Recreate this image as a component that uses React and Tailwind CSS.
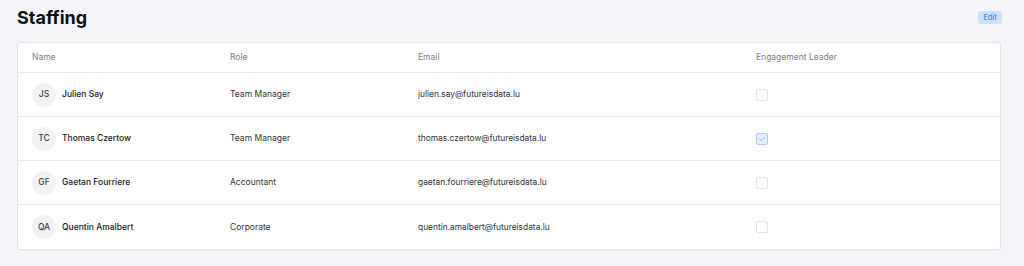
import React from "react";

const people = [
  { initials: "JS", name: "Julien Say", role: "Team Manager", email: "julien.say@futureisdata.lu", leader: false },
  { initials: "TC", name: "Thomas Czertow", role: "Team Manager", email: "thomas.czertow@futureisdata.lu", leader: true },
  { initials: "GF", name: "Gaetan Fourriere", role: "Accountant", email: "gaetan.fourriere@futureisdata.lu", leader: false },
  { initials: "QA", name: "Quentin Amalbert", role: "Corporate", email: "quentin.amalbert@futureisdata.lu", leader: false },
];

function Checkbox({ checked }) {
  return checked ? (
    <div className="w-[12px] h-[12px] rounded-[2px] border border-[#a9cdfb] bg-[#e6f0fe] flex items-center justify-center">
      <svg width="8" height="8" viewBox="0 0 8 8" fill="none">
        <path d="M1.5 4.2 L3.2 5.8 L6.5 2.3" stroke="#8fb8f2" strokeWidth="1" strokeLinecap="round" strokeLinejoin="round" />
      </svg>
    </div>
  ) : (
    <div className="w-[12px] h-[12px] rounded-[2px] border border-[#e3e4e8] bg-white" />
  );
}

export default function App() {
  return (
    <div className="w-[1024px] h-[266px] bg-[#f4f5f9] px-[17px] pt-[6px]" style={{ fontFamily: "Inter, 'Noto Sans', sans-serif" }}>
      <div className="flex items-start justify-between h-[36px]">
        <h1 className="text-[18px] leading-[24px] font-bold text-[#111]">Staffing</h1>
        <div className="mt-[5px] mr-[5px] h-[13px] w-[24px] rounded-[3px] bg-[#cfe2fd] text-[#4e8ff5] text-[7.5px] font-medium flex items-center justify-center">Edit</div>
      </div>
      <div className="w-[984px] bg-white border border-[#e4e5ea] rounded-[3px] shadow-[0_1px_1px_rgba(0,0,0,0.03)]">
        <div className="grid grid-cols-[198px_188px_338px_1fr] h-[30px] items-center border-b border-[#e8e9ee] text-[8.5px] text-[#7a7d86] pl-[14px]">
          <div>Name</div>
          <div>Role</div>
          <div>Email</div>
          <div>Engagement Leader</div>
        </div>
        {people.map((p, i) => (
          <div
            key={p.email}
            className={`grid grid-cols-[198px_188px_338px_1fr] h-[44px] items-center pl-[14px] text-[8.5px] text-[#222] ${i < people.length - 1 ? "border-b border-[#e8e9ee]" : ""}`}
          >
            <div className="flex items-center gap-[6px]">
              <div className="w-[24px] h-[24px] rounded-full bg-[#f2f2f3] text-[#444] text-[8.5px] font-medium flex items-center justify-center">{p.initials}</div>
              <span className="font-medium text-[#1a1a1a]">{p.name}</span>
            </div>
            <div className="text-[#333]">{p.role}</div>
            <div className="text-[#333] text-[8.4px]">{p.email}</div>
            <div><Checkbox checked={p.leader} /></div>
          </div>
        ))}
      </div>
    </div>
  );
}
